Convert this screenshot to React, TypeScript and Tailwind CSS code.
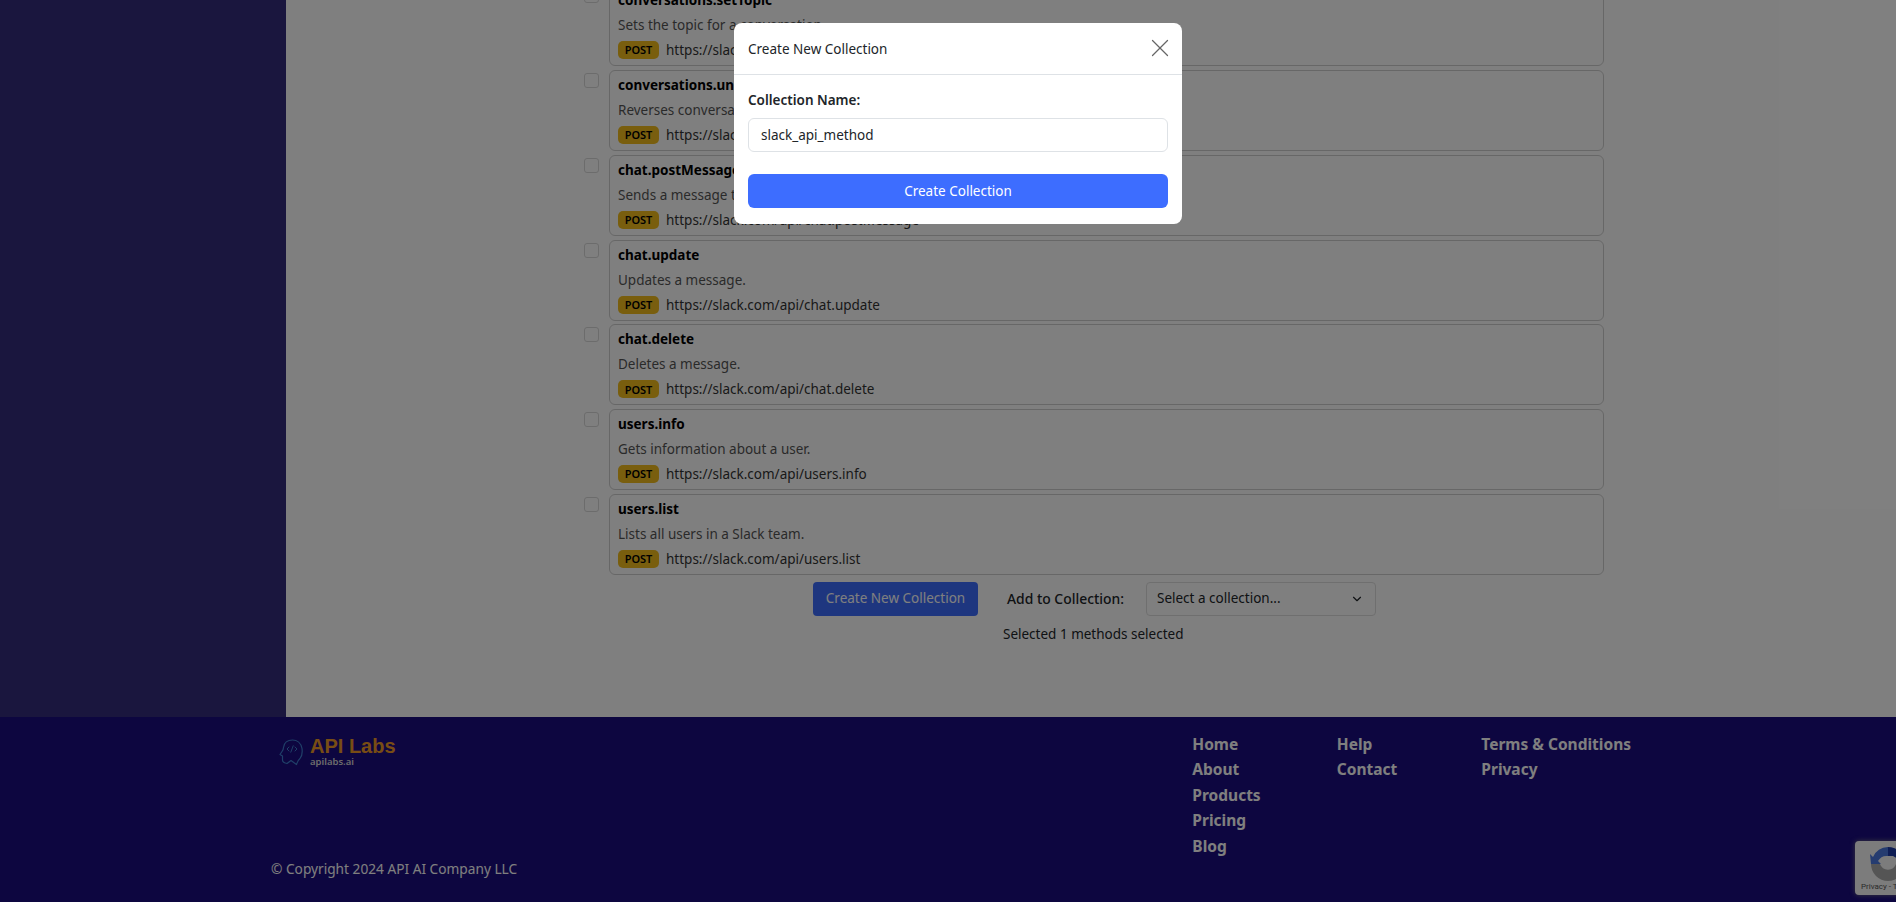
import { ChevronDown, X } from 'lucide-react';

const methods = [
  { name: 'conversations.setTopic', desc: 'Sets the topic for a conversation.', url: 'https://slack.com/api/conversations.setTopic' },
  { name: 'conversations.unarchive', desc: 'Reverses conversation archival.', url: 'https://slack.com/api/conversations.unarchive' },
  { name: 'chat.postMessage', desc: 'Sends a message to a channel.', url: 'https://slack.com/api/chat.postMessage' },
  { name: 'chat.update', desc: 'Updates a message.', url: 'https://slack.com/api/chat.update' },
  { name: 'chat.delete', desc: 'Deletes a message.', url: 'https://slack.com/api/chat.delete' },
  { name: 'users.info', desc: 'Gets information about a user.', url: 'https://slack.com/api/users.info' },
  { name: 'users.list', desc: 'Lists all users in a Slack team.', url: 'https://slack.com/api/users.list' },
];

function HeadLogo() {
  return (
    <svg width="24" height="27" viewBox="0 0 24 27" fill="none" stroke="#3f7fd0" strokeWidth="1.2" strokeLinecap="round" strokeLinejoin="round">
      <path d="M8 24.5 L12 21.5 L17.5 25.5 M17.5 25.5 C18.5 22 19 21 21 19.5 C23 17 23.5 13 23 9.5 C22 4 18 1 13.5 1 C8.5 1 5 4 4.5 8.5 C4.5 10 4 11 3 12.5 L1 15.5 L3.5 17 L3.5 21 C3.5 23 5 24 8 24.5" />
      <path d="M10 8 L8 10 L10 12 M16 8 L18 10 L16 12 M14.2 6.8 L11.8 13.2" strokeWidth="1" />
    </svg>
  );
}

function RecaptchaBadge() {
  return (
    <div className="absolute left-[1855px] top-[841px] flex h-[54px] w-[256px] flex-col items-start rounded bg-[#f9f9f9] pl-[6px] pt-[5px] shadow-[0_0_5px_rgba(128,128,128,0.9)]">
      <svg width="36" height="36" viewBox="0 0 36 36" className="ml-[9px]">
        <path d="M18 1 A17 17 0 0 1 35 18 L27 18 L30 14 L23 10 L18 10 Z" fill="#1c3aa9" />
        <path d="M18 1 A17 17 0 0 0 3 11 L0 8 L1 18 L11 18 L8 15 A10 10 0 0 1 18 10 Z" fill="#4a78e0" />
        <path d="M1 18 A17 17 0 0 0 35 18 L26 18 A8.5 8.5 0 0 1 10 18 Z" fill="#ababab" />
      </svg>
      <span className="font-['Roboto',sans-serif] text-[8px] leading-[10px] text-[#555]">Privacy - Terms</span>
    </div>
  );
}

export default function App() {
  return (
    <div className="relative flex h-screen flex-col overflow-hidden bg-white font-['Noto_Sans',sans-serif] text-sm text-[#212529]">
      <div className="flex h-[717px] shrink-0">
        <aside className="w-[286px] shrink-0 bg-[#342c7c]" />
        <main className="flex min-w-0 flex-1 flex-col justify-end overflow-hidden pb-[73px] pl-[298px] pr-[292px]">
          <div className="flex flex-col gap-[3.8px]">
            {methods.map((m) => (
              <div key={m.name} className="flex gap-[10px]">
                <div className="mt-[3px] h-[15px] w-[15px] shrink-0 rounded-[3px] border border-[#d8d8d8] bg-white" />
                <div className="flex h-[81px] flex-1 flex-col rounded-md border border-[#cfcfcf] px-2 pt-[4px]">
                  <div className="text-[13.5px] font-bold leading-[20px] text-black">{m.name}</div>
                  <div className="mt-[5px] text-[13.5px] leading-[20px] text-[#555]">{m.desc}</div>
                  <div className="mt-[5px] flex items-center gap-[7px]">
                    <span className="flex h-[18px] w-[41px] items-center justify-center rounded-[5px] bg-[#f2bd1d] text-[11px] font-semibold text-black">POST</span>
                    <span className="text-[13.5px] leading-[20px] text-[#333]">{m.url}</span>
                  </div>
                </div>
              </div>
            ))}
          </div>
          <div className="mt-[7px] ml-[229px] flex items-center">
            <button className="h-[34px] w-[165px] rounded bg-[#3d6dff] text-[13.5px] text-white">Create New Collection</button>
            <span className="ml-[29px] w-[117px] whitespace-nowrap text-[13.9px] font-medium text-[#212529]">Add to Collection:</span>
            <div className="ml-[22px] flex h-[34px] w-[230px] items-center justify-between rounded border border-[#dedede] pl-[10px] pr-[11px] text-[13.5px] text-[#212529]">
              Select a collection...
              <ChevronDown size={14} />
            </div>
          </div>
          <div className="ml-[419px] mt-[8px] text-[13.5px] leading-[20px] text-[#212529]">Selected 1 methods selected</div>
        </main>
      </div>

      <footer className="relative flex-1 bg-[#1a0c80] text-white">
        <div className="flex justify-between pl-[271px] pr-[265px] pt-[16px]">
          <div className="flex h-[146px] flex-col justify-between">
            <div className="ml-2 mt-[2px] flex gap-[7px]">
              <div className="mt-[4px]">
                <HeadLogo />
              </div>
              <div className="flex flex-col">
                <span className="font-['Liberation_Sans',sans-serif] text-[20px] font-bold leading-[22px] text-[#f09a28]">API Labs</span>
                <span className="-mt-[1px] font-['Noto_Sans',sans-serif] text-[9.5px] font-semibold leading-[12px] text-[#d8d8d8]">apilabs.ai</span>
              </div>
            </div>
            <div className="text-[13.7px] leading-[20px] text-white">© Copyright 2024 API AI Company LLC</div>
          </div>
          <div className="flex">
            {[['Home', 'About', 'Products', 'Pricing', 'Blog'], ['Help', 'Contact'], ['Terms & Conditions', 'Privacy']].map((col, i) => (
              <div key={i} className="flex w-[144.5px] flex-col gap-[3.4px] last:w-auto">
                {col.map((l) => (
                  <span key={l} className="whitespace-nowrap text-[15.5px] font-bold leading-[22px] text-white">{l}</span>
                ))}
              </div>
            ))}
          </div>
        </div>
      </footer>

      <RecaptchaBadge />

      <div className="absolute inset-0 bg-black/50" />

      <div className="absolute left-[734px] top-[23px] w-[448px] rounded-lg bg-white">
        <div className="flex h-[52px] items-center justify-between border-b border-[#dee2e6] pl-[14px] pr-[15px]">
          <span className="mt-[2px] text-[13.5px] text-[#212529]">Create New Collection</span>
          <X size={30} strokeWidth={1} className="-mr-[8px] -mt-[2px] text-[#666]" />
        </div>
        <div className="px-[14px] pb-[16px] pt-[15px]">
          <label className="block text-[13.5px] font-semibold leading-[20px] text-[#212529]">Collection Name:</label>
          <div className="mt-[8px] flex h-[34px] items-center rounded-md border border-[#dee2e6] px-3 pt-[2px] text-[13.5px] text-[#212529]">slack_api_method</div>
          <button className="mt-[22px] h-[34px] w-full rounded-md bg-[#3d6dff] pt-[1px] text-[13.5px] text-white">Create Collection</button>
        </div>
      </div>
    </div>
  );
}
